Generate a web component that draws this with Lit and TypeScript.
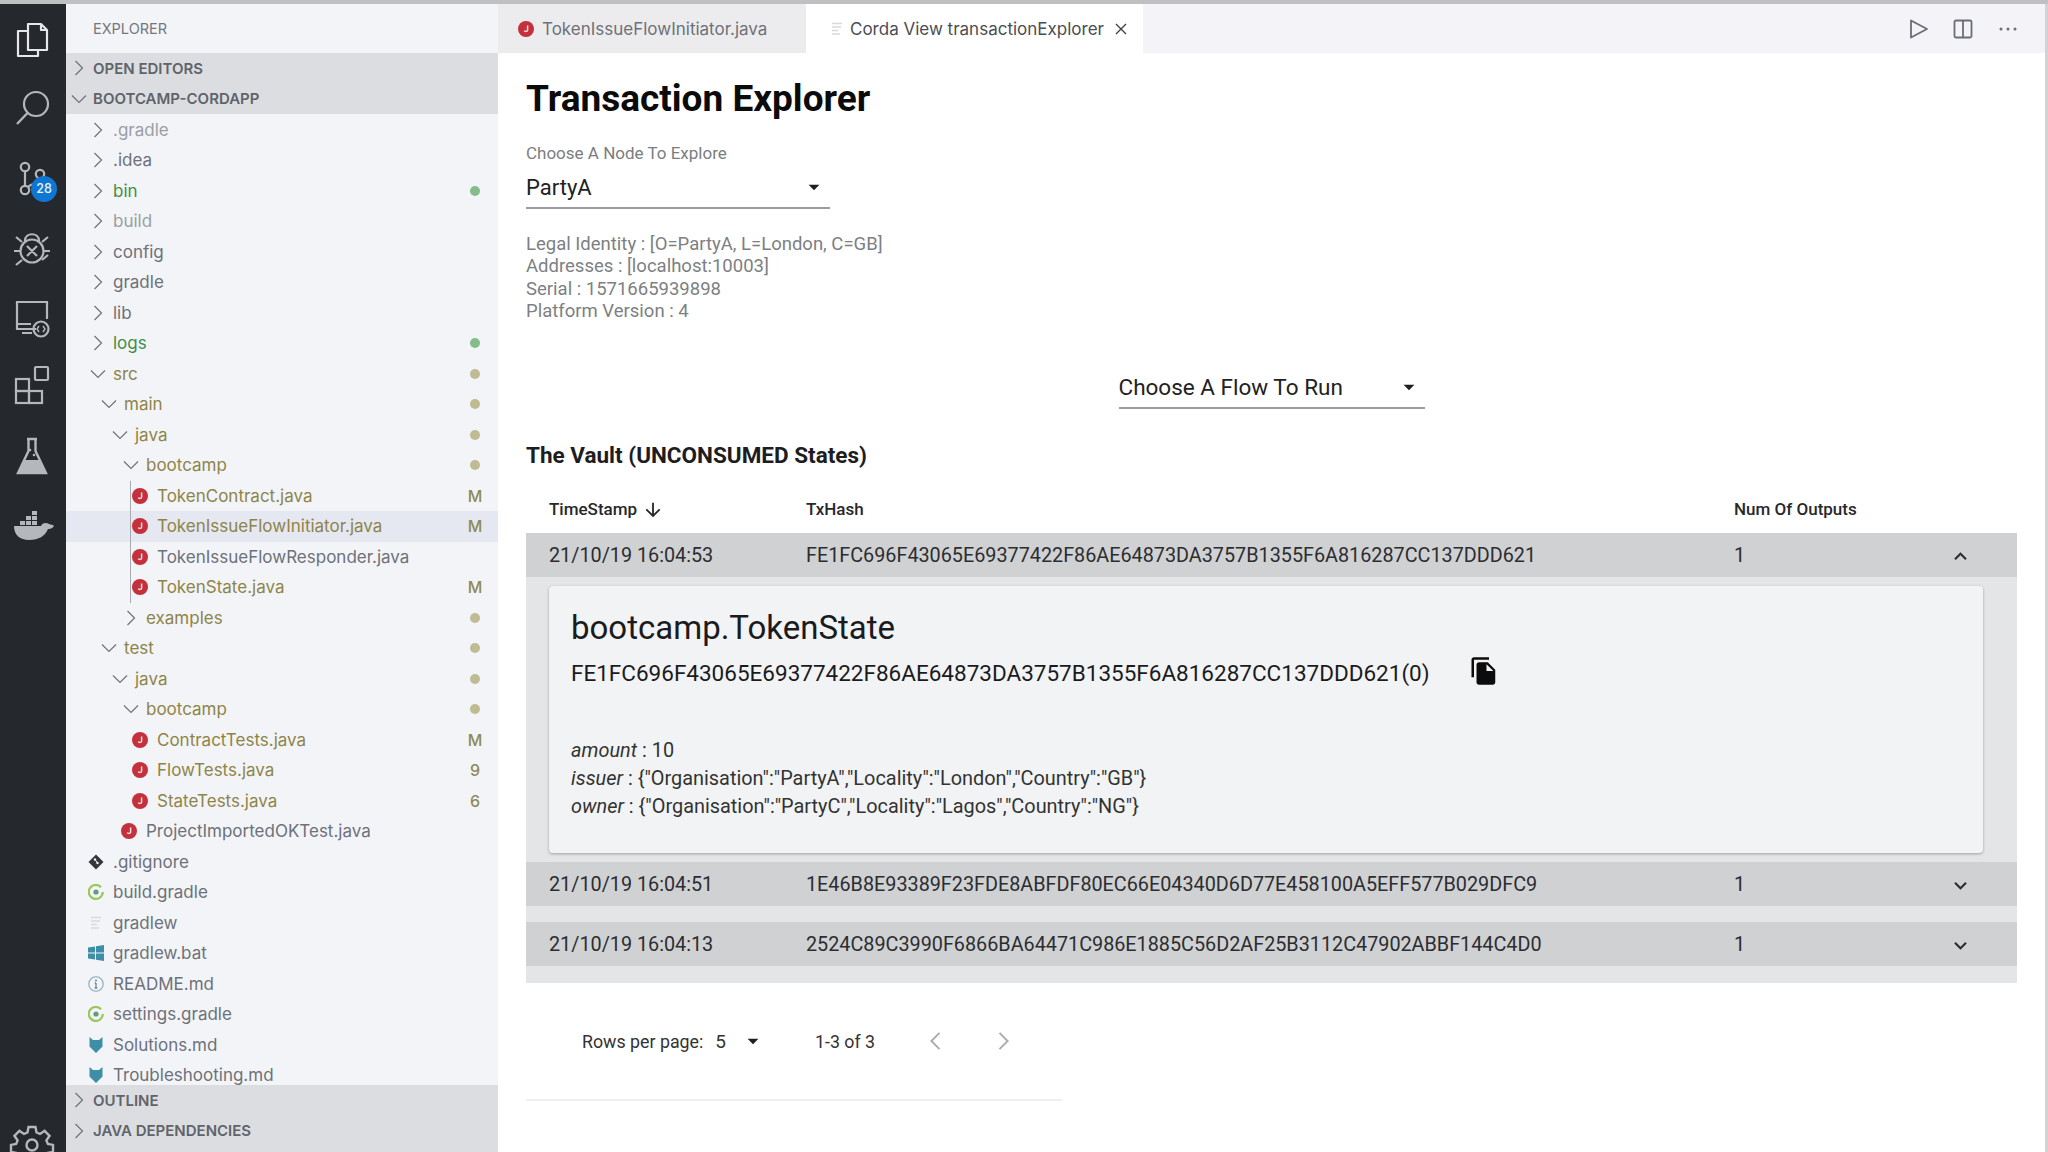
import { LitElement, html, css, svg } from "lit";
import { customElement } from "lit/decorators.js";

type Row = { n: string; d: number; k: string; c: string; b?: string; g?: boolean; a?: boolean };

const tree: Row[] = [
  { n: ".gradle", d: 0, k: "closed", c: "ign" },
  { n: ".idea", d: 0, k: "closed", c: "norm" },
  { n: "bin", d: 0, k: "closed", c: "grn", b: "dotg" },
  { n: "build", d: 0, k: "closed", c: "ign" },
  { n: "config", d: 0, k: "closed", c: "norm" },
  { n: "gradle", d: 0, k: "closed", c: "norm" },
  { n: "lib", d: 0, k: "closed", c: "norm" },
  { n: "logs", d: 0, k: "closed", c: "grn", b: "dotg" },
  { n: "src", d: 0, k: "open", c: "oli", b: "doto" },
  { n: "main", d: 1, k: "open", c: "oli", b: "doto" },
  { n: "java", d: 2, k: "open", c: "oli", b: "doto" },
  { n: "bootcamp", d: 3, k: "open", c: "oli", b: "doto" },
  { n: "TokenContract.java", d: 4, k: "java", c: "oli", b: "M", g: true },
  { n: "TokenIssueFlowInitiator.java", d: 4, k: "java", c: "oli", b: "M", g: true, a: true },
  { n: "TokenIssueFlowResponder.java", d: 4, k: "java", c: "norm", g: true },
  { n: "TokenState.java", d: 4, k: "java", c: "oli", b: "M", g: true },
  { n: "examples", d: 3, k: "closed", c: "oli", b: "doto" },
  { n: "test", d: 1, k: "open", c: "oli", b: "doto" },
  { n: "java", d: 2, k: "open", c: "oli", b: "doto" },
  { n: "bootcamp", d: 3, k: "open", c: "oli", b: "doto" },
  { n: "ContractTests.java", d: 4, k: "java", c: "oli", b: "M" },
  { n: "FlowTests.java", d: 4, k: "java", c: "oli", b: "9" },
  { n: "StateTests.java", d: 4, k: "java", c: "oli", b: "6" },
  { n: "ProjectImportedOKTest.java", d: 3, k: "java", c: "norm" },
  { n: ".gitignore", d: 0, k: "git", c: "norm" },
  { n: "build.gradle", d: 0, k: "gradle", c: "norm" },
  { n: "gradlew", d: 0, k: "text", c: "norm" },
  { n: "gradlew.bat", d: 0, k: "win", c: "norm" },
  { n: "README.md", d: 0, k: "info", c: "norm" },
  { n: "settings.gradle", d: 0, k: "gradle", c: "norm" },
  { n: "Solutions.md", d: 0, k: "md", c: "norm" },
  { n: "Troubleshooting.md", d: 0, k: "md", c: "norm" },
];

const chevR = svg`<path d="M4.5 1l7 7-7 7" fill="none" stroke="#6f7278" stroke-width="1.2"/>`;
const chevD = svg`<path d="M1 4.5l7 7 7-7" fill="none" stroke="#6f7278" stroke-width="1.2"/>`;

const fileIcon = (k: string) => {
  switch (k) {
    case "closed":
      return html`<svg class="ic dir" viewBox="0 0 16 16">${chevR}</svg>`;
    case "open":
      return html`<svg class="ic dir" viewBox="0 0 16 16">${chevD}</svg>`;
    case "java":
      return html`<svg class="ic" viewBox="0 0 16 16"><circle cx="8" cy="8" r="8" fill="#c4303c"/><path d="M9.6 4.5v4.7c0 1.3-2.6 1.7-3.4.4" fill="none" stroke="#f4dfe0" stroke-width="1.5"/></svg>`;
    case "git":
      return html`<svg class="ic" viewBox="0 0 16 16"><path d="M8 .5L15.5 8 8 15.5.5 8z" fill="#33373d"/><circle cx="7" cy="5.5" r="1.2" fill="#f3f4f8"/><circle cx="9.5" cy="9" r="1.2" fill="#f3f4f8"/><path d="M7 5.5L9.5 9" stroke="#f3f4f8"/></svg>`;
    case "gradle":
      return html`<svg class="ic" viewBox="0 0 16 16"><path d="M13 3.2A7 7 0 1 0 14.8 8" fill="none" stroke="#9ac65a" stroke-width="2.2"/><circle cx="8" cy="8" r="2.6" fill="#5f9e78"/></svg>`;
    case "text":
      return html`<svg class="ic" viewBox="0 0 16 16"><path d="M3 2.5h10M3 6h9M3 9.5h6M3 13h8" stroke="#d7d9de" stroke-width="1.6"/></svg>`;
    case "win":
      return html`<svg class="ic" viewBox="0 0 16 16"><path d="M0 2.6l7-1.2v6H0zM8 1.2L16 0v7.4H8zM0 8.6h7v6l-7-1.2zM8 8.6h8V16l-8-1.2z" fill="#3f8ea8"/></svg>`;
    case "info":
      return html`<svg class="ic" viewBox="0 0 16 16"><circle cx="8" cy="8" r="7.2" fill="none" stroke="#7fa9bb" stroke-width="1.1"/><path d="M8 7v5M6.6 12.2h2.8M6.8 7h1.2" stroke="#6d7f88" stroke-width="1.3"/><circle cx="8" cy="4.6" r="1" fill="#6d7f88"/></svg>`;
    case "md":
      return html`<svg class="ic" viewBox="0 0 16 16"><path d="M1.5 0l3.5 3h6l3.5-3v9.5L8 16 1.5 9.5z" fill="#3f8ea8"/></svg>`;
  }
  return "";
};

const S = "#b4b7bc";
const activity = [
  svg`<path d="M20 9h13l6 6v20H20z M33 9v6h6 M20 16H10v25h20v-6" fill="none" stroke="#e6e7e9" stroke-width="2.2" stroke-linejoin="round"/>`,
  svg`<circle cx="28" cy="20" r="12" fill="none" stroke="${S}" stroke-width="2.2"/><path d="M19.5 29L9 40" stroke="${S}" stroke-width="2.4"/>`,
  svg`<g fill="none" stroke="${S}" stroke-width="2.2"><circle cx="17" cy="13" r="4.2"/><circle cx="17" cy="36" r="4.2"/><circle cx="32" cy="20" r="4.2"/><path d="M17 17v15M32 24c0 6-9 5-12 9"/></g>`,
  svg`<g fill="none" stroke="${S}" stroke-width="2.2"><circle cx="24" cy="27" r="11.5"/><path d="M17 17c0-9 14-9 14 0M19 22l10 10M29 22L19 32M12 27H6M36 27h6M14 18l-6-5M34 18l6-5M14 36l-6 5M34 36l6-5"/></g>`,
  svg`<g fill="none" stroke="${S}" stroke-width="2.2"><path d="M28 36H9V9h30v17M9 31h14M14 40h10"/><circle cx="33" cy="36" r="7.5"/><path d="M31 33l-2 3 2 3M35 33l2 3-2 3" stroke-width="1.4"/></g>`,
  svg`<g fill="none" stroke="${S}" stroke-width="2.2" transform="translate(0 -3)"><rect x="8" y="19" width="13" height="12"/><rect x="8" y="31" width="13" height="12"/><rect x="21" y="31" width="13" height="12"/><rect x="27" y="7" width="13" height="13" rx="1"/></g>`,
  svg`<path d="M19 7h10M20.5 8v11L10 41h28L27.5 19V8" fill="none" stroke="${S}" stroke-width="2.4"/><path d="M16 28h16l6 13H10z" fill="${S}"/><circle cx="22" cy="18" r="1.3" fill="${S}"/><circle cx="26" cy="23" r="1.3" fill="${S}"/>`,
  svg`<path d="M8 25h27c1-3 5-4 8-2 2 .5 4 1 5 2-2 3-5 3-6 3-3 7-9 11-19 11C14 39 8 34 8 25z" fill="${S}" transform="translate(-2 -1)"/><path d="M12 19h5v4h-5zM18 19h5v4h-5zM24 19h5v4h-5zM18 14h5v4h-5zM24 14h5v4h-5zM24 9h5v4h-5z" fill="${S}"/>`,
];

const gear = svg`<g fill="none" stroke="${S}" stroke-width="2.4"><circle cx="24" cy="24" r="5.5"/><path d="M20.5 6h7l1 5.5 3.5 1.5 4.6-3.2 5 5-3.2 4.6 1.5 3.5 5.1 1v7l-5.1 1-1.5 3.5 3.2 4.6-5 5-4.6-3.2-3.5 1.5-1 5.5h-7l-1-5.5-3.5-1.5-4.6 3.2-5-5 3.2-4.6-1.5-3.5-5.1-1v-7l5.1-1 1.5-3.5-3.2-4.6 5-5 4.6 3.2 3.5-1.5z"/></g>`;

const rows = [
  { t: "21/10/19 16:04:53", h: "FE1FC696F43065E69377422F86AE64873DA3757B1355F6A816287CC137DDD621", open: true },
  { t: "21/10/19 16:04:51", h: "1E46B8E93389F23FDE8ABFDF80EC66E04340D6D77E458100A5EFF577B029DFC9", open: false },
  { t: "21/10/19 16:04:13", h: "2524C89C3990F6866BA64471C986E1885C56D2AF25B3112C47902ABBF144C4D0", open: false },
];

@customElement("app-root")
export class AppRoot extends LitElement {
  static styles = css`
    :host { display: block; width: 2048px; height: 1152px; overflow: hidden; background: #fff; }
    .top { height: 4px; background: #bfc0c2; }
    .shell { display: flex; height: 1148px; }
    .activity { width: 66px; flex: none; background: #25282d; display: flex; flex-direction: column; overflow: hidden; }
    .act { height: 69.6px; flex: none; display: flex; align-items: center; justify-content: center; position: relative; padding-right: 2px; box-sizing: border-box; }
    .act svg { width: 48px; height: 48px; }
    .act.gear { margin-top: auto; margin-bottom: -28px; }
    .badge { position: absolute; left: 31px; top: 33px; width: 26px; height: 26px; border-radius: 50%; background: #0f76d1; color: #e8f2fb; font: 500 12.5px/26px Inter, sans-serif; text-align: center; }
    .side { width: 432px; flex: none; background: #f3f4f8; display: flex; flex-direction: column; font-family: Inter, "Liberation Sans", sans-serif; }
    .exp { height: 49px; flex: none; display: flex; align-items: center; padding-left: 27px; font-size: 14.5px; color: #74777d; }
    .sec { height: 30.5px; flex: none; display: flex; align-items: center; background: #dcdde1; font-size: 15px; font-weight: 600; color: #606369; padding-left: 5px; }
    .sec svg { width: 16px; height: 16px; margin-right: 6px; }
    .tree { flex: 1; min-height: 0; overflow: hidden; padding-top: 0.5px; }
    .row { height: 30.5px; display: flex; align-items: center; font-size: 17px; position: relative; padding-right: 14px; }
    .row.active { background: #e5e7f1; }
    .ic { width: 16px; height: 16px; flex: none; margin-right: 9px; }
    .ic.dir { margin-right: 7px; }
    .name { flex: 1; white-space: nowrap; }
    .guide { position: absolute; left: 64px; top: 0; bottom: 0; width: 1px; background: #a9abb0; }
    .ign { color: #9b9ea4; }
    .norm { color: #6d7179; }
    .grn { color: #3f8f47; }
    .oli { color: #8d8448; }
    .badgeT { width: 18px; text-align: center; font-size: 16px; font-weight: 500; color: #8f8a55; }
    .dot { width: 10px; height: 10px; border-radius: 50%; margin: 0 4px; }
    .dotg { background: #86bb8a; }
    .doto { background: #bfbb93; }
    .fill { height: 6px; flex: none; background: #dcdde1; }
    .main { flex: 1; min-width: 0; display: flex; flex-direction: column; border-right: 3px solid #d2d3d5; font-family: Roboto, "Liberation Sans", sans-serif; overflow: hidden; }
    .tabs { height: 49px; flex: none; display: flex; background: #f3f3f8; align-items: stretch; font-family: Inter, sans-serif; font-size: 17px; color: #6e7177; }
    .tab { display: flex; align-items: center; background: #ececef; width: 308px; padding-left: 20px; box-sizing: border-box; }
    .tab .ic { margin-right: 8px; }
    .tab.on { background: #fff; width: 337px; padding-left: 23px; color: #4a4d53; }
    .tab.on .ic { margin-right: 5px; }
    .x { width: 14px; height: 14px; margin-left: 10px; }
    .acts { margin-left: auto; display: flex; align-items: center; padding-right: 25px; }
    .acts svg { width: 24px; height: 24px; margin-left: 21px; }
    .content { padding: 0 28px 0 28px; display: flex; flex-direction: column; }
    h1 { margin: 26px 0 0; font-size: 37px; line-height: 40px; font-weight: 700; color: #0b0b0c; }
    .lbl { margin-top: 24px; font-size: 17px; line-height: 20px; color: #7b7d81; }
    .sel { height: 46px; box-sizing: border-box; border-bottom: 2px solid #9b9c9f; display: flex; align-items: center; justify-content: space-between; font-size: 22px; color: #222; padding: 4px 3px 0 0; }
    .sel svg { width: 26px; height: 26px; }
    .node { width: 304px; }
    .info { margin-top: 24px; font-size: 18.5px; line-height: 22.3px; color: #7d7f83; }
    .flow { width: 306px; margin: 41px auto 0; font-size: 22.5px; }
    h2 { margin: 31px 0 0; font-size: 22.5px; line-height: 30px; font-weight: 700; color: #1d1d1f; }
    .grid { display: grid; grid-template-columns: 257px 928px 1fr 69px; padding-left: 23px; align-items: center; }
    .head { height: 46px; margin-top: 17px; font-size: 17px; font-weight: 500; color: #27282b; }
    .head span { margin-bottom: 3px; }
    .head span:first-child { margin-bottom: 0; }
    .head svg { width: 22px; height: 22px; margin-left: 5px; vertical-align: -6px; }
    .table { background: #e4e5e7; padding-bottom: 17px; }
    .tr { height: 44px; background: #d0d1d3; font-size: 19.8px; color: #2c2d30; }
    .tr svg { width: 25px; height: 25px; display: block; margin-top: 3px; }
    .gap { height: 16px; }
    .detail { padding: 9px 34px 9px 23px; }
    .card { background: #f2f3f5; border-radius: 4px; box-shadow: 0 1px 3px rgba(0,0,0,.3); padding: 22px; height: 267px; box-sizing: border-box; color: #1b1b1d; }
    .ct { font-size: 33px; line-height: 40px; }
    .cid { margin-top: 10px; font-size: 22.5px; line-height: 30px; display: flex; align-items: center; }
    .cid svg { width: 30px; height: 30px; margin-left: 39px; margin-top: -4px; }
    .attrs { margin-top: 49px; font-size: 19.9px; line-height: 28px; color: #333; }
    .attrs i { font-style: italic; }
    .pager { margin-top: 33px; height: 50px; display: flex; align-items: center; padding-left: 56px; font-size: 17.8px; color: #333; }
    .five { margin-left: 12px; font-size: 19px; }
    .pager .arr { width: 26px; height: 26px; margin-left: 14px; }
    .range { margin-left: 49px; }
    .pager .nav { width: 28px; height: 28px; margin-left: 47px; }
    .pager .nav.n { margin-left: 39px; }
    .rule { margin-top: 33px; width: 536px; height: 2px; background: #efefef; }
  `;

  private row(t: string, h: string, open: boolean) {
    return html`<div class="grid tr">
      <span>${t}</span><span>${h}</span><span>1</span>
      <svg viewBox="0 0 24 24"><path fill="#2c2d30" d=${open ? "M7.41 15.41 12 10.83l4.59 4.58L18 14l-6-6-6 6z" : "M7.41 8.59 12 13.17l4.59-4.58L18 10l-6 6-6-6z"}/></svg>
    </div>`;
  }

  render() {
    const sec = (t: string, open = false) => html`<div class="sec"><svg viewBox="0 0 16 16">${open ? chevD : chevR}</svg>${t}</div>`;
    return html`
      <div class="top"></div>
      <div class="shell">
        <nav class="activity">
          ${activity.map((a, i) => html`<div class="act"><svg viewBox="0 0 48 48">${a}</svg>${i === 2 ? html`<span class="badge">28</span>` : ""}</div>`)}
          <div class="act gear"><svg viewBox="0 0 48 48">${gear}</svg></div>
        </nav>
        <aside class="side">
          <div class="exp">EXPLORER</div>
          ${sec("OPEN EDITORS")}
          ${sec("BOOTCAMP-CORDAPP", true)}
          <div class="tree">
            ${tree.map((r) => html`<div class="row ${r.a ? "active" : ""}" style="padding-left:${r.k === "closed" || r.k === "open" ? 24 + r.d * 11 : 22 + r.d * 11}px">
              ${r.g ? html`<span class="guide"></span>` : ""}
              ${fileIcon(r.k)}
              <span class="name ${r.c}">${r.n}</span>
              ${r.b ? (r.b.startsWith("dot") ? html`<span class="dot ${r.b}"></span>` : html`<span class="badgeT">${r.b}</span>`) : ""}
            </div>`)}
          </div>
          ${sec("OUTLINE")}
          ${sec("JAVA DEPENDENCIES")}
          <div class="fill"></div>
        </aside>
        <main class="main">
          <div class="tabs">
            <div class="tab">${fileIcon("java")}TokenIssueFlowInitiator.java</div>
            <div class="tab on">${fileIcon("text")}Corda View transactionExplorer
              <svg class="x" viewBox="0 0 14 14"><path d="M2 2l10 10M12 2L2 12" stroke="#3f4247" stroke-width="1.4"/></svg>
            </div>
            <div class="acts">
              <svg viewBox="0 0 24 24"><path d="M5 3.5L21 12 5 20.5z" fill="none" stroke="#6b6e74" stroke-width="1.8" stroke-linejoin="round"/></svg>
              <svg viewBox="0 0 24 24"><rect x="3.5" y="3.5" width="17" height="17" rx="1.5" fill="none" stroke="#6b6e74" stroke-width="1.8"/><path d="M12 3.5v17" stroke="#6b6e74" stroke-width="1.8"/></svg>
              <svg viewBox="0 0 24 24"><circle cx="5" cy="12" r="1.5" fill="#6b6e74"/><circle cx="12" cy="12" r="1.5" fill="#6b6e74"/><circle cx="19" cy="12" r="1.5" fill="#6b6e74"/></svg>
            </div>
          </div>
          <div class="content">
            <h1>Transaction Explorer</h1>
            <div class="lbl">Choose A Node To Explore</div>
            <div class="sel node"><span>PartyA</span><svg viewBox="0 0 24 24"><path d="M7 10l5 5 5-5z" fill="#1f1f1f"/></svg></div>
            <div class="info">
              <div>Legal Identity : [O=PartyA, L=London, C=GB]</div>
              <div>Addresses : [localhost:10003]</div>
              <div>Serial : 1571665939898</div>
              <div>Platform Version : 4</div>
            </div>
            <div class="sel flow"><span>Choose A Flow To Run</span><svg viewBox="0 0 24 24"><path d="M7 10l5 5 5-5z" fill="#1f1f1f"/></svg></div>
            <h2>The Vault (UNCONSUMED States)</h2>
            <div class="grid head">
              <span>TimeStamp<svg viewBox="0 0 24 24"><path fill="#27282b" d="M20 12l-1.41-1.41L13 16.17V4h-2v12.17l-5.58-5.6L4 12l8 8 8-8z"/></svg></span>
              <span>TxHash</span><span>Num Of Outputs</span><span></span>
            </div>
            <div class="table">
              ${this.row(rows[0].t, rows[0].h, true)}
              <div class="detail">
                <div class="card">
                  <div class="ct">bootcamp.TokenState</div>
                  <div class="cid"><span>${rows[0].h}(0)</span>
                    <svg viewBox="0 0 24 24"><path fill="#0c0c0c" d="M16 1H4c-1.1 0-2 .9-2 2v14h2V3h12V1zm-1 4l6 6v10c0 1.1-.9 2-2 2H7.99C6.89 23 6 22.1 6 21l.01-14c0-1.1.89-2 1.99-2h7zm-1 7h5.5L14 6.5V12z"/></svg>
                  </div>
                  <div class="attrs">
                    <div><i>amount</i> : 10</div>
                    <div><i>issuer</i> : {"Organisation":"PartyA","Locality":"London","Country":"GB"}</div>
                    <div><i>owner</i> : {"Organisation":"PartyC","Locality":"Lagos","Country":"NG"}</div>
                  </div>
                </div>
              </div>
              ${this.row(rows[1].t, rows[1].h, false)}
              <div class="gap"></div>
              ${this.row(rows[2].t, rows[2].h, false)}
            </div>
            <div class="pager">
              <span>Rows per page:</span><span class="five">5</span>
              <svg class="arr" viewBox="0 0 24 24"><path d="M7 10l5 5 5-5z" fill="#1f1f1f"/></svg>
              <span class="range">1-3 of 3</span>
              <svg class="nav" viewBox="0 0 24 24"><path d="M15 5l-7 7 7 7" fill="none" stroke="#a9aaad" stroke-width="1.6"/></svg>
              <svg class="nav n" viewBox="0 0 24 24"><path d="M9 5l7 7-7 7" fill="none" stroke="#a9aaad" stroke-width="1.6"/></svg>
            </div>
            <div class="rule"></div>
          </div>
        </main>
      </div>
    `;
  }
}
